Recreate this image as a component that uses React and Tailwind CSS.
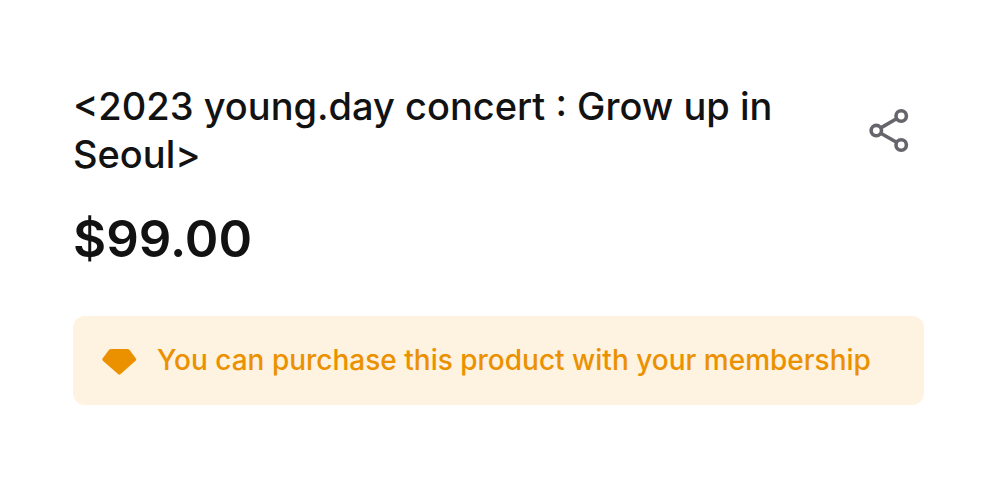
const ShareIcon = () => (
  <svg width="48" height="48" viewBox="0 0 48 48" fill="none" stroke="#65656c" strokeWidth="3.600">
    <circle cx="8.300" cy="24.600" r="5.200" />
    <circle cx="33.200" cy="10" r="5.200" />
    <circle cx="33.200" cy="39" r="5.200" />
    <path d="M12.800 21.900 28.500 12.700M12.800 27.300 28.500 36.300" />
  </svg>
);

const DiamondIcon = () => (
  <svg width="36" height="32" viewBox="0 0 36 32" fill="#eb9100" className="shrink-0">
    <path d="M10.500 4h15.500a4 4 0 0 1 3 1.400l5.900 8.100a1.800 1.800 0 0 1-.3 2.300L19.300 29.300a1.600 1.600 0 0 1-2 0L1.900 15.800a1.800 1.800 0 0 1-.3-2.300l5.900-8.100A4 4 0 0 1 10.500 4Z" />
  </svg>
);

const App = () => {
  return (
    <main className="bg-white pt-[82px] pr-[70px] pb-[75px] pl-[73px] font-['Inter',sans-serif] text-[#121212]">
      <div className="flex items-center justify-between">
        <h1 className="max-w-[720px] text-[38px] leading-[48px] font-medium">
          &lt;2023 young.day concert : Grow up in Seoul&gt;
        </h1>
        <button type="button" aria-label="Share" className="mr-2 shrink-0">
          <ShareIcon />
        </button>
      </div>
      <p className="mt-6 text-[51px] leading-[74px] font-semibold">$99.00</p>
      <div className="mt-10 flex items-center gap-5 rounded-xl bg-[#fef2e0] px-7 py-6 text-[#eb9100]">
        <DiamondIcon />
        <p className="text-[28px] leading-[41px] font-medium">
          You can purchase this product with your membership
        </p>
      </div>
    </main>
  );
};

export default App;
